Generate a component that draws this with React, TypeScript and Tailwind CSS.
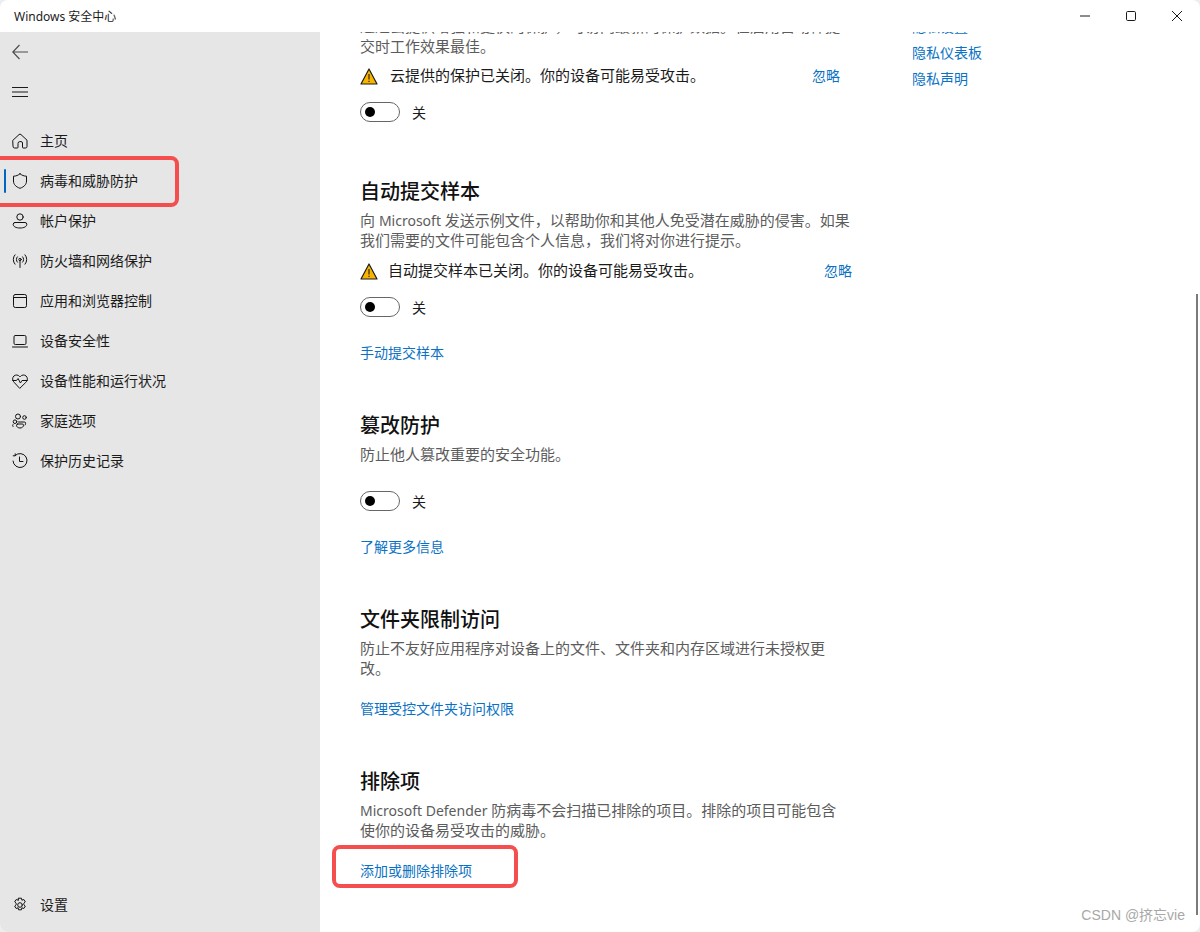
import React from "react";

function Ic({ children }: { children: React.ReactNode }) {
  return (
    <svg width="16" height="16" viewBox="0 0 16 16" fill="none" stroke="#111111" strokeWidth="1" strokeLinecap="round" strokeLinejoin="round" className="shrink-0">
      {children}
    </svg>
  );
}

const icons: Record<string, React.ReactNode> = {
  home: <path d="M1 7.2 7 1.6a1.4 1.4 0 0 1 2 0l6 5.6v6.300a1.500 1.500 0 0 1-1.500 1.500h-2.300a.7.7 0 0 1-.7-.7V10a1.400 1.400 0 0 0-1.400-1.400H7.900A1.900 1.900 0 0 0 6 10.500v3.800a.7.7 0 0 1-.7.7H2.500A1.500 1.500 0 0 1 1 13.500Z" />,
  shield: <path d="M8 .8c1.800 1.500 3.900 2.300 6.500 2.400V8c0 3.400-2.300 5.800-6.500 7.300C3.800 13.800 1.500 11.400 1.500 8V3.200C4.100 3.100 6.200 2.300 8 .8Z" />,
  user: (
    <>
      <circle cx="8" cy="4" r="3.200" />
      <path d="M3 9.500h10a1.800 1.800 0 0 1 1.800 1.800c0 2.400-2.900 3.700-6.800 3.700s-6.800-1.300-6.800-3.700A1.800 1.800 0 0 1 3 9.500Z" />
    </>
  ),
  wifi: (
    <>
      <circle cx="8" cy="6.500" r="1.200" />
      <path d="M8 8v6.500M5.400 3.800a3.800 3.800 0 0 0 0 5.400M10.600 3.800a3.800 3.800 0 0 1 0 5.400M3 1.800a7 7 0 0 0 0 9.400M13 1.800a7 7 0 0 1 0 9.400" />
    </>
  ),
  app: (
    <>
      <rect x="1.500" y="1.500" width="13" height="13" rx="1.800" />
      <path d="M1.500 4.500h13" />
    </>
  ),
  laptop: (
    <>
      <rect x="2" y="2.500" width="12" height="9" rx="1.300" />
      <path d="M.5 14h15" />
    </>
  ),
  heart: (
    <>
      <path d="M2.300 9.500 1.700 8.800C.2 7.200.3 4.500 1.900 3c1.700-1.500 4.300-1.300 5.700.5l.4.5.4-.5C9.800 1.700 12.400 1.500 14.100 3c1.600 1.500 1.700 4.200.2 5.800l-.6.7-5.700 5.600Z" />
      <path d="M.8 7.500h3.700l1.600-2 2.300 4.500 1.600-2.500h5.200" />
    </>
  ),
  family: (
    <>
      <circle cx="6" cy="3.500" r="2.500" />
      <circle cx="12.500" cy="4.500" r="1.800" />
      <circle cx="3" cy="8.700" r="1.800" />
      <path d="M6.500 9h5.800a1.300 1.300 0 0 1 1.300 1.300c0 .8-.2 1.200-.5 1.700" />
      <path d="M5.700 11h4.600a1.200 1.200 0 0 1 1.200 1.200c0 1.700-1.600 2.800-3.500 2.800s-3.500-1.100-3.500-2.800A1.200 1.200 0 0 1 5.700 11Z" />
      <path d="M1 11.500c-.5.5-.6 1.600.2 2.200" />
    </>
  ),
  history: (
    <>
      <path d="M3.200 2.400A7 7 0 1 1 1 8" />
      <path d="M3.200.8v2h-2" />
      <path d="M7.500 4v4.500H11" />
    </>
  ),
  gear: (
    <>
      <circle cx="8" cy="8" r="2.300" />
      <path d="M6.600 1.200h2.800l.5 2 1.900-.7 1.500 2.400-1.500 1.400a4 4 0 0 1 0 1.400l1.500 1.400-1.500 2.400-1.900-.7-.5 2H6.600l-.5-2-1.900.7-1.500-2.400 1.500-1.400a4 4 0 0 1 0-1.400L2.700 4.900l1.500-2.400 1.900.7Z" />
    </>
  ),
};

const navItems: [string, string][] = [
  ["home", "主页"],
  ["shield", "病毒和威胁防护"],
  ["user", "帐户保护"],
  ["wifi", "防火墙和网络保护"],
  ["app", "应用和浏览器控制"],
  ["laptop", "设备安全性"],
  ["heart", "设备性能和运行状况"],
  ["family", "家庭选项"],
  ["history", "保护历史记录"],
];

function NavRow({ icon, label, active }: { icon: string; label: string; active?: boolean }) {
  return (
    <div className="relative flex h-10 items-center gap-3 pl-3 text-sm leading-5 text-[#1b1b1b]">
      {active && <div className="absolute left-1 top-2 h-6 w-0.5 rounded-full bg-[#0067c0]" />}
      <Ic>{icons[icon]}</Ic>
      <span>{label}</span>
    </div>
  );
}

function Warning({ text, width, gap }: { text: string; width: string; gap: string }) {
  return (
    <div className={`flex h-5 items-center justify-between ${width}`}>
      <div className={`flex h-5 items-center ${gap}`}>
        <svg width="18" height="17" viewBox="0 0 18 17" className="shrink-0">
          <path d="M9 1 17 16H1Z" fill="#f9b400" stroke="#1c1c1c" strokeWidth="1.200" strokeLinejoin="round" />
          <path d="M9 6v5.500M9 12.700v1.300" stroke="#1c1c1c" strokeWidth="1.100" />
        </svg>
        <span className="pb-0.5 text-[15px] leading-5 text-[#1b1b1b]">{text}</span>
      </div>
      <span className="text-sm leading-5 text-[#0a72c4]">忽略</span>
    </div>
  );
}

function Toggle() {
  return (
    <div className="flex h-5 items-center gap-3">
      <div className="flex h-5 w-10 items-center rounded-full border border-[#666666] pl-1">
        <div className="h-2.5 w-2.5 rounded-full bg-black" />
      </div>
      <span className="pt-0.5 text-sm leading-5 text-[#1b1b1b]">关</span>
    </div>
  );
}

function H({ children, mt }: { children: React.ReactNode; mt: string }) {
  return <h2 className={`${mt} h-7 text-xl font-medium leading-[30px] text-[#111111]`}>{children}</h2>;
}

function P({ children }: { children: React.ReactNode }) {
  return <p className="mt-[5px] whitespace-nowrap pb-px text-[15px] leading-5 text-[#5c5c5c]">{children}</p>;
}

function A({ children, mt }: { children: React.ReactNode; mt: string }) {
  return <div className={`${mt} text-sm leading-5 text-[#0a72c4]`}>{children}</div>;
}

export default function App() {
  return (
    <div
      className="relative h-[932px] w-[1200px] overflow-hidden bg-[#ededed]"
      style={{ fontFamily: '"Noto Sans", "Noto Sans CJK SC", sans-serif' }}
    >
      <div className="flex h-full w-full flex-col overflow-hidden rounded-lg bg-white">
        <header className="flex h-8 shrink-0 items-center justify-between pl-3.5">
          <span className="pt-0.5 text-xs leading-4 text-[#1b1b1b]">Windows 安全中心</span>
          <div className="flex h-8 items-center">
            <div className="flex h-8 w-[46px] items-center justify-center">
              <svg width="10" height="10" viewBox="0 0 10 10" fill="none" stroke="#1b1b1b"><path d="M0 5h10" /></svg>
            </div>
            <div className="flex h-8 w-[46px] items-center justify-center">
              <svg width="10" height="10" viewBox="0 0 10 10" fill="none" stroke="#1b1b1b"><rect x=".5" y=".5" width="9" height="9" rx="1.200" /></svg>
            </div>
            <div className="flex h-8 w-[46px] items-center justify-center">
              <svg width="10" height="10" viewBox="0 0 10 10" fill="none" stroke="#1b1b1b"><path d="M0 0l10 10M10 0 0 10" /></svg>
            </div>
          </div>
        </header>
        <div className="flex min-h-0 flex-1">
          <aside className="flex w-80 shrink-0 flex-col bg-[#e6e6e6]">
            <div className="flex h-10 shrink-0 items-center pl-3">
              <svg width="16" height="16" viewBox="0 0 16 16" fill="none" stroke="#4a4a4a" strokeWidth="1.100"><path d="M16 8H.8M7.500 1 .8 8l6.700 7" /></svg>
            </div>
            <div className="flex h-10 shrink-0 items-center pl-3">
              <svg width="16" height="16" viewBox="0 0 16 16" fill="none" stroke="#1b1b1b"><path d="M0 3.500h16M0 8h16M0 12.500h16" /></svg>
            </div>
            <nav className="mt-[9px] flex flex-col">
              {navItems.map(([icon, label]) => (
                <NavRow key={label} icon={icon} label={label} active={icon === "shield"} />
              ))}
            </nav>
            <div className="mt-auto pb-[7px]">
              <NavRow icon="gear" label="设置" />
            </div>
          </aside>
          <main className="relative flex min-w-0 flex-1 overflow-hidden pl-10">
            <div className="-mt-[15px] w-[552px] shrink-0">
              <p className="-mt-px whitespace-nowrap pb-px text-[15px] leading-5 text-[#5c5c5c]">
                通过云提供增强和更快的保护，可访问最新的保护数据。在启用自动样提
                <br />
                交时工作效果最佳。
              </p>
              <div className="mt-[9px]">
                <Warning text="云提供的保护已关闭。你的设备可能易受攻击。" width="w-[480px]" gap="gap-3" />
              </div>
              <div className="mt-4"><Toggle /></div>

              <H mt="mt-[55px]">自动提交样本</H>
              <P>
                向 <span className="text-sm leading-none">Microsoft</span> 发送示例文件，以帮助你和其他人免受潜在威胁的侵害。如果
                <br />
                我们需要的文件可能包含个人信息，我们将对你进行提示。
              </P>
              <div className="mt-2.5">
                <Warning text="自动提交样本已关闭。你的设备可能易受攻击。" width="w-[492px]" gap="gap-2.5" />
              </div>
              <div className="mt-4"><Toggle /></div>
              <A mt="mt-[26px]">手动提交样本</A>

              <H mt="mt-12">篡改防护</H>
              <P>防止他人篡改重要的安全功能。</P>
              <div className="mt-[26px]"><Toggle /></div>
              <A mt="mt-[26px]">了解更多信息</A>

              <H mt="mt-12">文件夹限制访问</H>
              <P>
                防止不友好应用程序对设备上的文件、文件夹和内存区域进行未授权更
                <br />
                改。
              </P>
              <A mt="mt-5">管理受控文件夹访问权限</A>

              <H mt="mt-12">排除项</H>
              <P>
                <span className="text-sm leading-none">Microsoft Defender</span> 防病毒不会扫描已排除的项目。排除的项目可能包含
                <br />
                使你的设备易受攻击的威胁。
              </P>
              <A mt="mt-5">添加或删除排除项</A>
            </div>
            <div className="-mt-[15px] flex shrink-0 flex-col gap-1.5 text-sm leading-5 text-[#0a72c4]">
              <span>隐私设置</span>
              <span>隐私仪表板</span>
              <span>隐私声明</span>
            </div>
          </main>
        </div>
      </div>

      <div className="absolute right-0.5 top-[294px] h-[621px] w-0.5 bg-[#7a7a7a]" />
      <div className="absolute left-[-8px] top-[156px] h-[51px] w-[187px] rounded-lg border-4 border-[#f44e4e]" />
      <div className="absolute left-[332px] top-[845px] h-[43px] w-[186px] rounded-lg border-4 border-[#f44e4e]" />
      <span
        className="absolute right-[15px] top-[905px] text-sm leading-5 text-[#a8a8a8]"
        style={{ fontFamily: '"Liberation Sans", "Noto Sans CJK SC", sans-serif' }}
      >
        CSDN @挤忘vie
      </span>
    </div>
  );
}
